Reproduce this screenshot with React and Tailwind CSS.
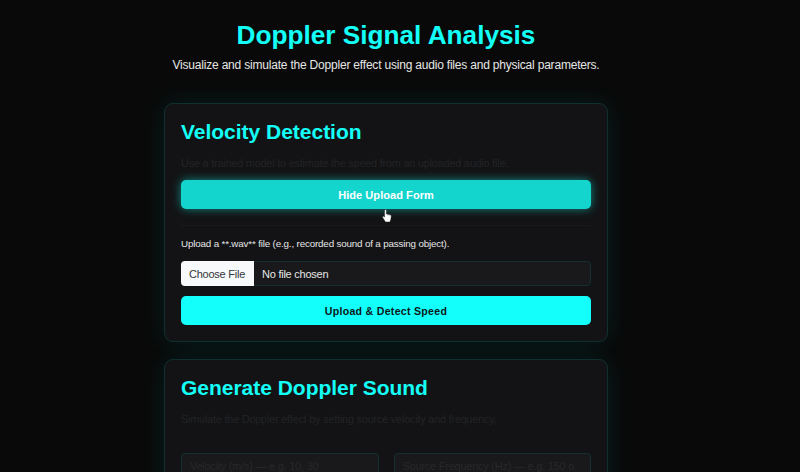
function Card({ title, description, className = '', children }) {
  return (
    <section className={`rounded-[9px] border border-[#10302f] bg-[#131315] px-4 shadow-[0_0_26px_rgba(0,255,255,0.09)] ${className}`}>
      <h2 className="mt-[15px] text-[21px] leading-[26px] font-bold tracking-[-0.02px] text-[#13fff8]">{title}</h2>
      <p className="mt-[10px] text-[10.8px] leading-[16px] tracking-[-0.17px] text-[#222325]">{description}</p>
      {children}
    </section>
  );
}

function PointerCursor() {
  return (
    <svg className="absolute left-[382px] top-[209px] h-[14px] w-[10px]" viewBox="0 0 10 14" aria-hidden="true">
      <path
        d="M2.6 1.4c0-1.2 1.8-1.2 1.8 0v3.7l3.6.7c.9.2 1.3.8 1.2 1.7l-.4 3-1 2.4H3.5L.8 8.7c-.7-1 .4-1.8 1.2-1.1l.6.6z"
        fill="#fff"
        stroke="#16181a"
        strokeWidth=".4"
      />
      <path d="M6 5.5V7M7.6 5.8v1.5" stroke="#999" strokeWidth=".4" />
    </svg>
  );
}

export default function App() {
  return (
    <div className="relative h-[472px] overflow-hidden bg-[#090909] font-['Liberation_Sans',Arial,sans-serif]">
      <div className="ml-[164px] w-[444px]">
        <header className="pt-[19px] text-center whitespace-nowrap">
          <h1 className="text-[26.2px] leading-[32px] font-bold text-[#13fff8]">Doppler Signal Analysis</h1>
          <p className="mt-[6px] text-[12px] leading-[16px] tracking-[-0.2px] text-[#e6e6e6]">
            Visualize and simulate the Doppler effect using audio files and physical parameters.
          </p>
        </header>
        <main className="mt-[30px]">
          <Card
            title="Velocity Detection"
            description="Use a trained model to estimate the speed from an uploaded audio file."
            className="h-[239px]"
          >
            <button className="mt-[9px] block h-[29px] w-full rounded-[5px] bg-[#13d5cd] pt-px text-[11px] font-bold tracking-[0.06px] text-white shadow-[0_0_10px_rgba(19,213,205,0.6)]">
              Hide Upload Form
            </button>
            <div className="mt-[16px] border-t border-[#19191b] pt-[11px]">
              <p className="text-[9.8px] leading-[14px] tracking-[-0.16px] text-[#e6e6e6]">
                Upload a **.wav** file (e.g., recorded sound of a passing object).
              </p>
              <div className="mt-[10px] flex h-[25px] items-stretch rounded-[4px] border border-[#123130] bg-[#19191b] text-[11px] tracking-[-0.24px]">
                <span className="-my-px -ml-px flex w-[73px] items-center rounded-l-[4px] bg-[#f8f9fa] pt-px pl-[8px] text-[#333639]">
                  Choose File
                </span>
                <span className="flex items-center pt-px pl-[8px] text-[#e6e6e6]">No file chosen</span>
              </div>
              <button className="mt-[10px] block h-[29px] w-full rounded-[5px] bg-[#13fffc] pt-[2px] text-[10.6px] font-bold tracking-[0.28px] text-[#0b1819]">
                Upload &amp; Detect Speed
              </button>
            </div>
          </Card>
          <Card
            title="Generate Doppler Sound"
            description="Simulate the Doppler effect by setting source velocity and frequency."
            className="mt-[17px] h-[239px]"
          >
            <div className="mt-[26px] grid grid-cols-2 gap-[15px] text-[11px] tracking-[-0.24px] text-[#27282a]">
              <div className="h-[25px] overflow-hidden rounded-[4px] border border-[#123130] bg-[#19191b] px-[8px] leading-[24px] whitespace-nowrap">
                Velocity (m/s) — e.g. 10, 30
              </div>
              <div className="h-[25px] overflow-hidden rounded-[4px] border border-[#123130] bg-[#19191b] px-[8px] leading-[24px] whitespace-nowrap">
                Source Frequency (Hz) — e.g. 150 o
              </div>
            </div>
          </Card>
        </main>
      </div>
      <PointerCursor />
    </div>
  );
}
